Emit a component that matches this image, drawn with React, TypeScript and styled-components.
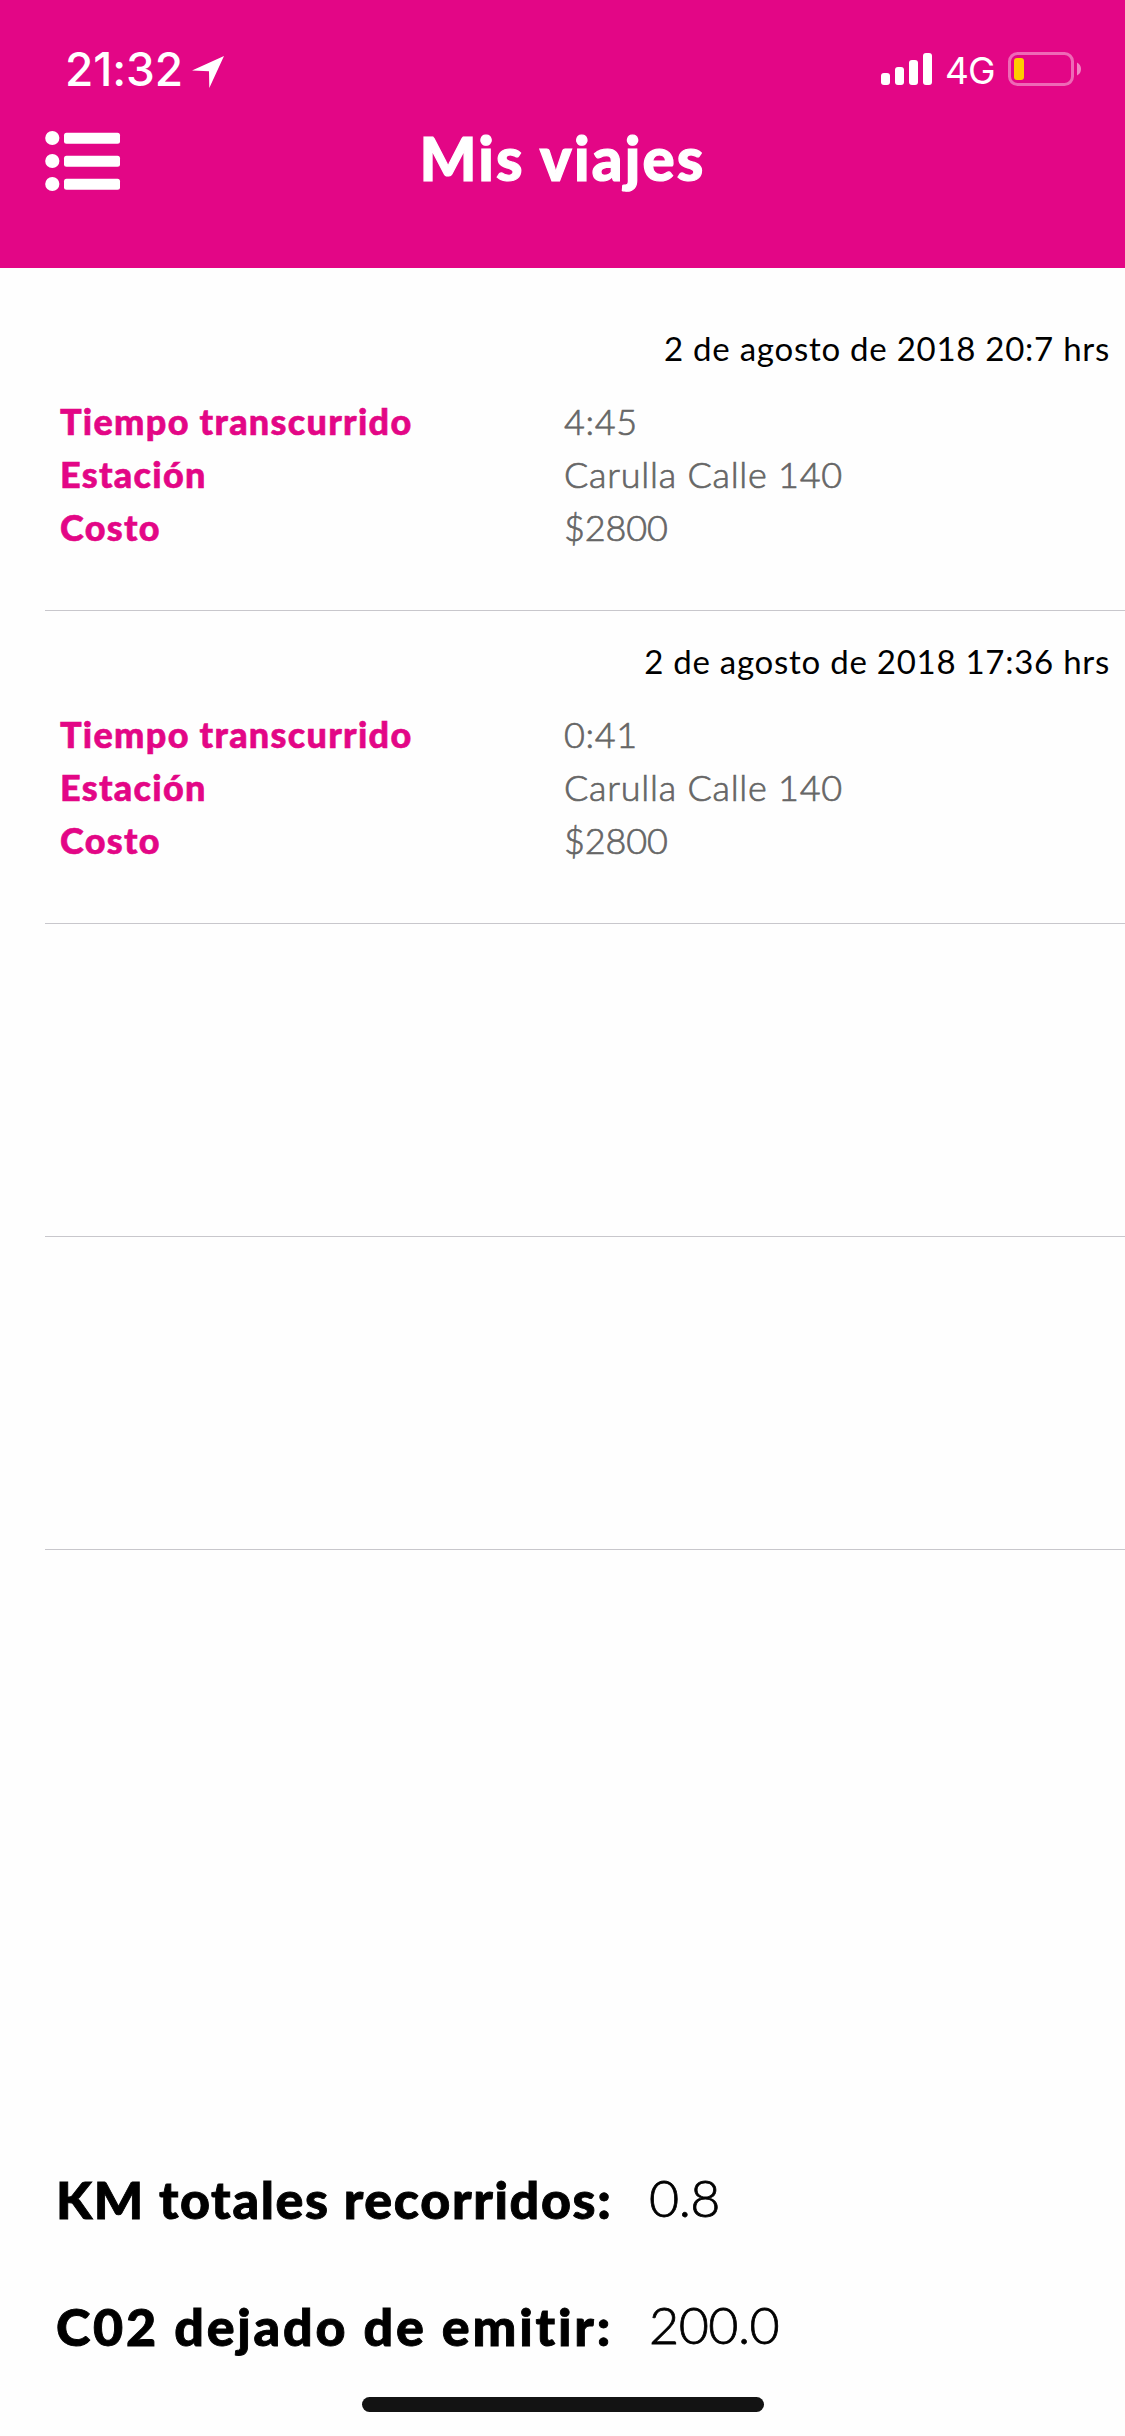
import React from "react";
import styled, { createGlobalStyle } from "styled-components";

const pink = "#e30686";

const GlobalStyle = createGlobalStyle`
  *, *::before, *::after { box-sizing: border-box; }
  body { margin: 0; background: #fefefe; }
`;

const Screen = styled.main`
  display: flex;
  flex-direction: column;
  width: 1125px;
  height: 2436px;
  overflow: hidden;
  background: #fefefe;
  font-family: Lato, "Open Sans", sans-serif;
  font-variant-ligatures: none;
  white-space: nowrap;
`;

const Header = styled.header`
  flex: none;
  height: 268px;
  background: ${pink};
  color: #fff;
`;

const StatusBar = styled.div`
  display: flex;
  justify-content: space-between;
  height: 121px;
  padding: 42px 43px 0 65px;
  font-family: Inter, sans-serif;
`;

const StatusGroup = styled.div`
  display: flex;
  height: 54px;
`;

const Clock = styled.span`
  width: 127px;
  font-size: 46px;
  font-weight: 500;
  line-height: 54px;
  letter-spacing: -0.1px;
`;

const Network = styled.span`
  width: 63px;
  margin-left: 12px;
  font-size: 37px;
  line-height: 57px;
  letter-spacing: -1px;
`;

const NavBar = styled.nav`
  display: grid;
  grid-template-columns: 1fr auto 1fr;
  padding: 0 45px;
`;

const MenuButton = styled.button`
  display: flex;
  width: 76px;
  height: 72px;
  padding: 9px 0 0;
  border: 0;
  background: none;
  color: inherit;
`;

const Title = styled.h1`
  margin: 0;
  font-size: 60px;
  font-weight: 900;
  line-height: 75px;
  letter-spacing: 2.2px;
  -webkit-text-stroke: 1.2px currentColor;
`;

const TripList = styled.ul`
  flex: 1;
  margin: 0;
  padding: 30px 0 0 45px;
  list-style: none;
`;

const Trip = styled.li`
  height: 313px;
  padding: 25px 15px 0 15px;
  border-bottom: 1px solid #c8c7cc;
`;

const TripDate = styled.time`
  display: block;
  height: 72px;
  color: #000;
  font-size: 33px;
  line-height: 51px;
  text-align: right;
  letter-spacing: 0.74px;
`;

const Details = styled.dl`
  display: grid;
  grid-template-columns: 504px 1fr;
  grid-auto-rows: 53px;
  margin: 0;
  font-size: 36px;
  line-height: 53px;
`;

const Label = styled.dt`
  color: ${pink};
  font-weight: 900;
  letter-spacing: 1.3px;
  -webkit-text-stroke: 0.6px currentColor;
`;

const Value = styled.dd<{ $spacing?: number }>`
  margin: 0;
  color: #666;
  font-weight: 300;
  letter-spacing: ${({ $spacing = 0.6 }) => $spacing}px;
  -webkit-text-stroke: 0.7px currentColor;
`;

const Summary = styled.dl`
  display: grid;
  grid-template-columns: 593px 1fr;
  grid-auto-rows: 127px;
  margin: 0;
  padding-left: 56px;
  height: 238px;
  color: #000;
  font-size: 52px;
  line-height: 80px;
`;

const SummaryLabel = styled.dt<{ $spacing: number }>`
  font-weight: 900;
  letter-spacing: ${({ $spacing }) => $spacing}px;
  -webkit-text-stroke: 0.9px currentColor;
`;

const SummaryValue = styled.dd`
  margin: -2px 0 0;
  font-weight: 300;
  letter-spacing: -0.5px;
  -webkit-text-stroke: 0.8px currentColor;
`;

const HomeIndicator = styled.div`
  flex: none;
  align-self: center;
  width: 402px;
  height: 15px;
  margin-bottom: 24px;
  border-radius: 8px;
  background: #131313;
`;

const trips: Array<{ date: string; time: string; station: string; cost: string } | null> = [
  { date: "2 de agosto de 2018 20:7 hrs", time: "4:45", station: "Carulla Calle 140", cost: "$2800" },
  { date: "2 de agosto de 2018 17:36 hrs", time: "0:41", station: "Carulla Calle 140", cost: "$2800" },
  null,
  null,
];

const LocationArrow = () => (
  <svg width="32" height="54" viewBox="192 42 32 54" fill="#fff">
    <path d="M224 56 192 70.6 209 71.2 209.3 88Z" />
  </svg>
);

const Signal = () => (
  <svg width="52" height="54" viewBox="881 42 52 54" fill="#fff">
    <rect x="881" y="73" width="9" height="12" rx="3" />
    <rect x="895" y="67" width="9" height="18" rx="3" />
    <rect x="909" y="60" width="9" height="25" rx="3" />
    <rect x="923" y="53" width="9" height="32" rx="3" />
  </svg>
);

const Battery = () => (
  <svg width="74" height="54" viewBox="1008 42 74 54">
    <rect x="1009.5" y="53.5" width="63" height="31" rx="8" fill="none" stroke="#fff" strokeOpacity=".4" strokeWidth="3" />
    <path d="M1077 62.5Q1081 64.5 1081 69T1077 75.5Z" fill="#fff" fillOpacity=".5" />
    <rect x="1014" y="58" width="10" height="22" rx="3" fill="#fc0" />
  </svg>
);

const MenuIcon = () => (
  <svg width="76" height="63" viewBox="45 130 76 63" fill="#fff">
    {[138, 161, 184].map((y) => (
      <g key={y}>
        <circle cx="52.3" cy={y} r="7.1" />
        <rect x="64" y={y - 5.2} width="56" height="10.9" rx="2.5" />
      </g>
    ))}
  </svg>
);

export default function App() {
  return (
    <Screen>
      <GlobalStyle />
      <Header>
        <StatusBar>
          <StatusGroup>
            <Clock>21:32</Clock>
            <LocationArrow />
          </StatusGroup>
          <StatusGroup>
            <Signal />
            <Network>4G</Network>
            <Battery />
          </StatusGroup>
        </StatusBar>
        <NavBar>
          <MenuButton aria-label="Menú">
            <MenuIcon />
          </MenuButton>
          <Title>Mis viajes</Title>
        </NavBar>
      </Header>
      <TripList>
        {trips.map((trip, i) => (
          <Trip key={i}>
            {trip && (
              <>
                <TripDate>{trip.date}</TripDate>
                <Details>
                  <Label>Tiempo transcurrido</Label>
                  <Value>{trip.time}</Value>
                  <Label>Estación</Label>
                  <Value $spacing={0.75}>{trip.station}</Value>
                  <Label>Costo</Label>
                  <Value $spacing={-0.1}>{trip.cost}</Value>
                </Details>
              </>
            )}
          </Trip>
        ))}
      </TripList>
      <Summary>
        <SummaryLabel $spacing={1.65}>KM totales recorridos:</SummaryLabel>
        <SummaryValue>0.8</SummaryValue>
        <SummaryLabel $spacing={2.8}>C02 dejado de emitir:</SummaryLabel>
        <SummaryValue>200.0</SummaryValue>
      </Summary>
      <HomeIndicator />
    </Screen>
  );
}
